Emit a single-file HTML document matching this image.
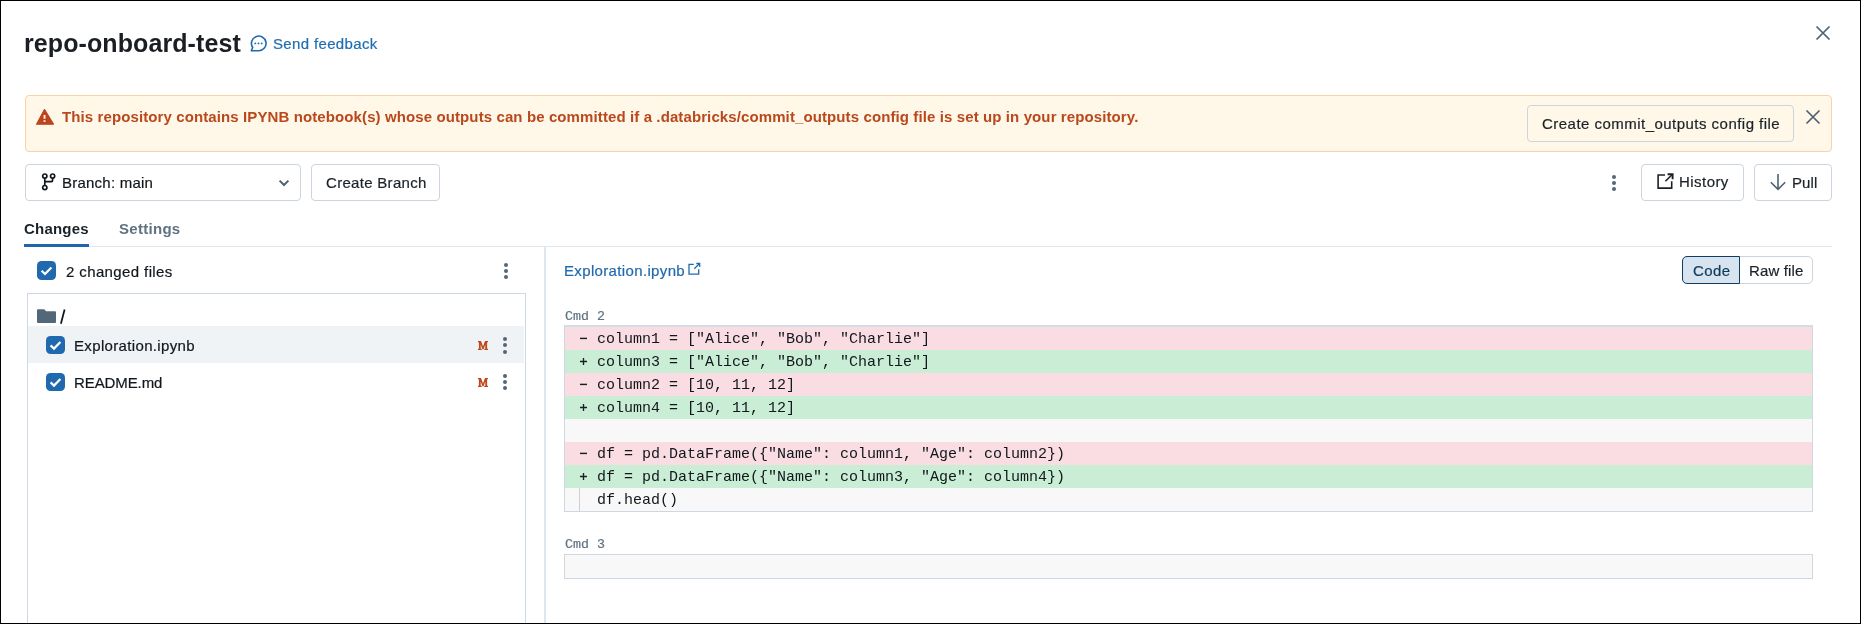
<!DOCTYPE html>
<html><head><meta charset="utf-8">
<style>
*{box-sizing:border-box;margin:0;padding:0}
html,body{width:1861px;height:624px;overflow:hidden;background:#fff}
body{font-family:"Liberation Sans",sans-serif;color:#11171C;position:relative}
.a{position:absolute}
.t{position:absolute;white-space:pre;line-height:1;will-change:transform;-webkit-text-stroke:0.2px currentColor}
.frame{position:absolute;left:0;top:0;width:1861px;height:624px;border:1px solid #000;pointer-events:none;z-index:50}
.btn{position:absolute;border:1px solid #CBD5DF;border-radius:4px;background:transparent}
.mono{font-family:"Liberation Mono",monospace}
.cb{position:absolute;width:19px;height:19px;border-radius:4.5px;background:#2169AE}
.cb svg{position:absolute;left:0;top:0}
.dots{position:absolute;width:4px}
.dots i{position:absolute;left:0;width:4px;height:4px;border-radius:50%;background:#536677}
.mm{font-family:"Liberation Serif",serif;font-weight:700;font-size:14.5px;color:#C0461C;transform:scaleX(0.72);transform-origin:0 0}
.row{position:absolute;left:0;width:1247px;height:23px}
.del{background:#F9DDE2}
.add{background:#C9EED5}
.neu{background:#F8F8F8}
.code{position:absolute;will-change:transform;left:32.2px;top:5px;font-family:"Liberation Mono",monospace;font-size:15px;line-height:15px;white-space:pre;color:#11171C}
.mk{position:absolute;left:15px;top:0}
.gut{position:absolute;left:14px;top:0;width:1px;height:23px;background:#CFCFCF}
</style></head><body>
<div class="frame"></div>

<!-- Title -->
<div class="t" style="left:23.8px;top:31px;font-size:25px;font-weight:700;-webkit-text-stroke:0;letter-spacing:0.09px;color:#1B1F23">repo-onboard-test</div>
<svg class="a" style="left:246px;top:31px" width="26" height="26" viewBox="0 0 26 26">
  <path d="M12.7 19.7A7.3 7.3 0 1 0 6.7 16.5L5.3 19.7Z" fill="none" stroke="#2169AE" stroke-width="1.6" stroke-linejoin="round"/>
  <circle cx="9.3" cy="12.4" r="0.95" fill="#2169AE"/><circle cx="12.5" cy="12.4" r="0.95" fill="#2169AE"/><circle cx="15.7" cy="12.4" r="0.95" fill="#2169AE"/>
</svg>
<div class="t" style="left:272.5px;top:35.7px;font-size:15px;letter-spacing:0.35px;color:#1F6DB0">Send feedback</div>

<!-- top close -->
<svg class="a" style="left:1815px;top:25px" width="16" height="16" viewBox="0 0 16 16">
  <path d="M1.5 1.5L14.5 14.5M14.5 1.5L1.5 14.5" stroke="#4F6272" stroke-width="1.7" fill="none"/>
</svg>

<!-- Alert -->
<div class="a" style="left:25px;top:95px;width:1807px;height:57px;border:1px solid #F6D3A9;border-radius:4px;background:#FFF7E8"></div>
<svg class="a" style="left:34.5px;top:108px" width="20" height="18" viewBox="0 0 20 18">
  <path d="M9.5 1.6L18.4 16.2H1.6Z" fill="#B9461E" stroke="#B9461E" stroke-width="1.3" stroke-linejoin="round"/>
  <rect x="8.6" y="7" width="1.9" height="3.8" fill="#FFF7E8"/>
  <rect x="8.6" y="12.2" width="1.9" height="1.7" fill="#FFF7E8"/>
</svg>
<div class="t" style="left:62px;top:109px;font-size:15px;font-weight:700;-webkit-text-stroke:0;letter-spacing:0.107px;color:#B9481C">This repository contains IPYNB notebook(s) whose outputs can be committed if a .databricks/commit_outputs config file is set up in your repository.</div>
<div class="btn" style="left:1527px;top:105px;width:267px;height:37px"></div>
<div class="t" style="left:1542px;top:115.9px;font-size:15px;letter-spacing:0.472px;color:#1A2228">Create commit_outputs config file</div>
<svg class="a" style="left:1804.5px;top:109px" width="16" height="16" viewBox="0 0 16 16">
  <path d="M1.5 1.5L14.5 14.5M14.5 1.5L1.5 14.5" stroke="#4F6272" stroke-width="1.7" fill="none"/>
</svg>

<!-- Branch select -->
<div class="btn" style="left:25px;top:164px;width:276px;height:37px"></div>
<svg class="a" style="left:41px;top:172px" width="16" height="20" viewBox="0 0 16 20">
  <circle cx="3.8" cy="4.1" r="2.1" fill="none" stroke="#11171C" stroke-width="1.7"/>
  <circle cx="11.6" cy="4.1" r="2.1" fill="none" stroke="#11171C" stroke-width="1.7"/>
  <circle cx="3.8" cy="15.6" r="2.1" fill="none" stroke="#11171C" stroke-width="1.7"/>
  <path d="M3.8 6.2V13.5M11.6 6.2V8Q11.6 9.7 9.9 9.7H3.8" fill="none" stroke="#11171C" stroke-width="1.7"/>
</svg>
<div class="t" style="left:62px;top:174.6px;font-size:15px;letter-spacing:0.227px;color:#11171C">Branch: main</div>
<svg class="a" style="left:278px;top:179px" width="12" height="8" viewBox="0 0 12 8">
  <path d="M1.6 1.6L6 6L10.4 1.6" fill="none" stroke="#4F6272" stroke-width="2"/>
</svg>
<div class="btn" style="left:311px;top:164px;width:129px;height:37px"></div>
<div class="t" style="left:325.5px;top:174.6px;font-size:15px;letter-spacing:0.3px;color:#1A2228">Create Branch</div>

<!-- right actions -->
<div class="dots" style="left:1611.6px;top:175px"><i style="top:0"></i><i style="top:6.2px"></i><i style="top:12.4px"></i></div>
<div class="btn" style="left:1641px;top:164px;width:103px;height:37px"></div>
<svg class="a" style="left:1657px;top:173px" width="17" height="17" viewBox="0 0 17 17">
  <path d="M8 2H1.1V15.1H14.7V8.3" fill="none" stroke="#1A2228" stroke-width="1.6"/>
  <path d="M8.4 8.3L15 1.7" fill="none" stroke="#1A2228" stroke-width="1.6"/>
  <path d="M10.6 1.2H15.6V6.2" fill="none" stroke="#1A2228" stroke-width="1.9"/>
</svg>
<div class="t" style="left:1679.4px;top:173.5px;font-size:15px;letter-spacing:0.45px;color:#1A2228">History</div>
<div class="btn" style="left:1754px;top:164px;width:78px;height:37px"></div>
<svg class="a" style="left:1769px;top:173px" width="18" height="18" viewBox="0 0 18 18">
  <path d="M9 1V16.5M1.8 9.2L9 16.4L16.2 9.2" fill="none" stroke="#4F6272" stroke-width="1.6"/>
</svg>
<div class="t" style="left:1792.2px;top:174.6px;font-size:15px;letter-spacing:0.1px;color:#1A2228">Pull</div>

<!-- Tabs -->
<div class="t" style="left:24.3px;top:220.8px;font-size:15px;font-weight:700;-webkit-text-stroke:0;letter-spacing:0.217px;color:#1A2228">Changes</div>
<div class="t" style="left:118.5px;top:220.8px;font-size:15px;font-weight:700;-webkit-text-stroke:0;letter-spacing:0.286px;color:#5F7281">Settings</div>
<div class="a" style="left:25px;top:246px;width:1807px;height:1px;background:#E0E7EE"></div>
<div class="a" style="left:24px;top:243.5px;width:64.5px;height:3.5px;background:#2066AC"></div>

<!-- Divider -->
<div class="a" style="left:544px;top:247px;width:2px;height:377px;background:#DEE6EE"></div>

<!-- Left panel -->
<div class="cb" style="left:37px;top:261px"><svg width="19" height="19" viewBox="0 0 19 19"><path d="M4.6 9.8L8 13L14.4 6.4" fill="none" stroke="#fff" stroke-width="2.2"/></svg></div>
<div class="t" style="left:65.5px;top:263.5px;font-size:15px;letter-spacing:0.386px;color:#11171C">2 changed files</div>
<div class="dots" style="left:504.3px;top:263.2px"><i style="top:0"></i><i style="top:6px"></i><i style="top:12px"></i></div>

<div class="a" style="left:27px;top:293px;width:499px;height:340px;border:1px solid #CCD9E5"></div>
<svg class="a" style="left:37px;top:309px" width="19" height="15" viewBox="0 0 19 15">
  <path d="M0 1Q0 0.2 1 0.2H7.2L9.2 2.2H18Q19 2.2 19 3.2V13Q19 14 18 14H1Q0 14 0 13Z" fill="#53677A"/>
</svg>
<svg class="a" style="left:59px;top:309px" width="7" height="16" viewBox="0 0 7 16"><path d="M5.6 0.5L1.9 14.8" stroke="#11171C" stroke-width="1.75"/></svg>

<div class="a" style="left:28px;top:326.4px;width:496px;height:36.2px;background:#F0F3F6"></div>
<div class="cb" style="left:46px;top:336px;height:18px"><svg width="19" height="18" viewBox="0 0 19 18"><path d="M4.6 9.4L8 12.6L14.4 6" fill="none" stroke="#fff" stroke-width="2.2"/></svg></div>
<div class="t" style="left:74px;top:337.9px;font-size:15px;letter-spacing:0.344px;color:#11171C">Exploration.ipynb</div>
<svg class="a" style="left:477.5px;top:341px" width="10" height="9" viewBox="0 0 10 9"><path d="M0 0H3L5 5.4L7 0H10V1.3H9.1V7.7H10V9H6.3V7.7H7.3V3.4L5.6 8.2H4.4L2.7 3.4V7.7H3.7V9H0V7.7H0.9V1.3H0Z" fill="#C0461C"/></svg>
<div class="dots" style="left:503px;top:337.4px"><i style="top:0"></i><i style="top:6px"></i><i style="top:12.2px"></i></div>

<div class="cb" style="left:46px;top:373px;height:18px"><svg width="19" height="18" viewBox="0 0 19 18"><path d="M4.6 9.4L8 12.6L14.4 6" fill="none" stroke="#fff" stroke-width="2.2"/></svg></div>
<div class="t" style="left:74px;top:374.8px;font-size:15px;letter-spacing:-0.1px;color:#11171C">README.md</div>
<svg class="a" style="left:477.5px;top:378px" width="10" height="9" viewBox="0 0 10 9"><path d="M0 0H3L5 5.4L7 0H10V1.3H9.1V7.7H10V9H6.3V7.7H7.3V3.4L5.6 8.2H4.4L2.7 3.4V7.7H3.7V9H0V7.7H0.9V1.3H0Z" fill="#C0461C"/></svg>
<div class="dots" style="left:503px;top:373.5px"><i style="top:0"></i><i style="top:6.3px"></i><i style="top:12.5px"></i></div>

<!-- Right panel -->
<div class="t" style="left:564px;top:262.7px;font-size:15px;letter-spacing:0.35px;color:#2169AE">Exploration.ipynb</div>
<svg class="a" style="left:687px;top:262px" width="14" height="14" viewBox="0 0 14 14">
  <path d="M6.7 2.4H2V12.2H11.7V7.3" fill="none" stroke="#2169AE" stroke-width="1.3"/>
  <path d="M7.3 6.7L12.4 1.6" fill="none" stroke="#2169AE" stroke-width="1.3"/>
  <path d="M9.3 1.5H12.6V4.8" fill="none" stroke="#2169AE" stroke-width="1.5"/>
</svg>

<div class="a" style="left:1682px;top:256px;width:131px;height:28px;border:1px solid #CBD5DF;border-radius:5px"></div>
<div class="a" style="left:1682px;top:256px;width:58px;height:28px;border:1.5px solid #123D62;border-radius:5px 0 0 5px;background:#D7E3EE"></div>
<div class="t" style="left:1692.5px;top:262.5px;font-size:15px;letter-spacing:0.4px;color:#0E3A5E">Code</div>
<div class="t" style="left:1749.3px;top:262.5px;font-size:15px;letter-spacing:0.129px;color:#1A2228">Raw file</div>

<div class="t mono" style="left:564.5px;top:310px;font-size:13.3px;color:#5F7281">Cmd 2</div>

<div class="a" style="left:564px;top:325px;width:1249px;height:187px;border:1px solid #CDD8E2;border-top:2px solid #D3DCE5;background:#F8F8F8">
  <div class="row del" style="top:0px"><svg class="mk" width="8" height="23" viewBox="0 0 8 23"><path d="M0 11.4H7" stroke="#1A1F24" stroke-width="1.45"/></svg><span class="code">column1 = ["Alice", "Bob", "Charlie"]</span></div>
  <div class="row add" style="top:23px"><svg class="mk" width="8" height="23" viewBox="0 0 8 23"><path d="M0 11.5H7M3.5 8V15" stroke="#1A1F24" stroke-width="1.35"/></svg><span class="code">column3 = ["Alice", "Bob", "Charlie"]</span></div>
  <div class="row del" style="top:46px"><svg class="mk" width="8" height="23" viewBox="0 0 8 23"><path d="M0 11.4H7" stroke="#1A1F24" stroke-width="1.45"/></svg><span class="code">column2 = [10, 11, 12]</span></div>
  <div class="row add" style="top:69px"><svg class="mk" width="8" height="23" viewBox="0 0 8 23"><path d="M0 11.5H7M3.5 8V15" stroke="#1A1F24" stroke-width="1.35"/></svg><span class="code">column4 = [10, 11, 12]</span></div>
  <div class="row neu" style="top:92px"></div>
  <div class="row del" style="top:115px"><svg class="mk" width="8" height="23" viewBox="0 0 8 23"><path d="M0 11.4H7" stroke="#1A1F24" stroke-width="1.45"/></svg><span class="code">df = pd.DataFrame({"Name": column1, "Age": column2})</span></div>
  <div class="row add" style="top:138px"><svg class="mk" width="8" height="23" viewBox="0 0 8 23"><path d="M0 11.5H7M3.5 8V15" stroke="#1A1F24" stroke-width="1.35"/></svg><span class="code">df = pd.DataFrame({"Name": column3, "Age": column4})</span></div>
  <div class="row neu" style="top:161px"><div class="gut"></div><span class="code">df.head()</span></div>
</div>

<div class="t mono" style="left:564.5px;top:538px;font-size:13.3px;color:#5F7281">Cmd 3</div>
<div class="a" style="left:564px;top:554px;width:1249px;height:25px;border:1px solid #CDD8E2;background:#F8F8F8"></div>

</body></html>
